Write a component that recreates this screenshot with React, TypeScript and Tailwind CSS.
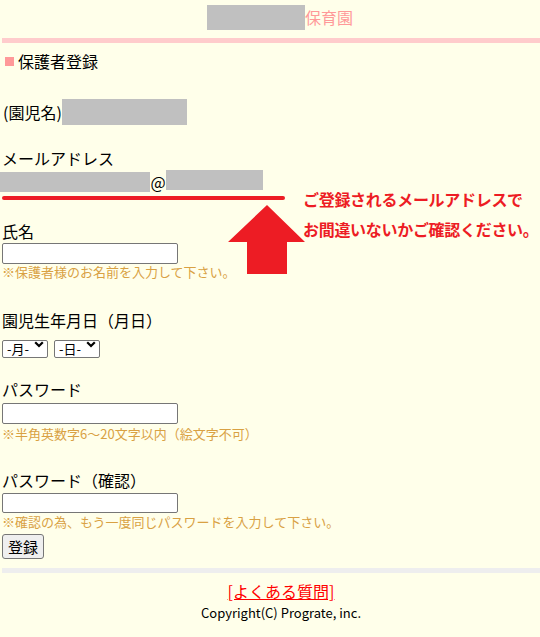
import React from "react";

const Chevron = () => (
  <svg width="10" height="7" viewBox="0 0 10 7" className="pointer-events-none absolute right-[4px] top-[6px]">
    <path d="M1.2 1.2 L5 5 L8.8 1.2" fill="none" stroke="#000" strokeWidth="2.2" />
  </svg>
);

const Select = ({ label }: { label: string }) => (
  <div className="relative h-[18px] w-[46px]">
    <select className="box-border h-[18px] w-[46px] appearance-none rounded-[2px] border border-[#767676] bg-white pl-[4px] text-[13px] leading-[16px] text-black">
      <option>{label}</option>
    </select>
    <Chevron />
  </div>
);

const Input = ({ h = 21 }: { h?: number }) => (
  <input
    type="text"
    className={`ml-[2px] w-[176px] rounded-[2px] border border-[#767676] bg-white ${h === 21 ? "h-[21px]" : "h-[20px]"}`}
  />
);

const Label = ({ children, mt }: { children: React.ReactNode; mt: string }) => (
  <div className={`${mt} flex h-[22px] items-center pl-[2px] text-[16px] leading-[22px] text-black`}>{children}</div>
);

const Hint = ({ children, mt = "" }: { children: React.ReactNode; mt?: string }) => (
  <div className={`${mt} flex h-[16px] items-center pl-[2px] text-[13px] leading-[16px] text-[#d9a143]`}>{children}</div>
);

export default function App() {
  return (
    <div
      className="relative min-h-[637px] w-[540px] overflow-hidden bg-[#ffffea]"
      style={{ fontFamily: '"Noto Sans CJK JP", "Noto Sans", sans-serif' }}
    >
      {/* header */}
      <div className="flex h-[38px] items-start pl-[207px] pt-[5px]">
        <div className="h-[25px] w-[98px] bg-[#c0c0c0]" />
        <span className="text-[16px] leading-[25px] text-[#ff9999]">保育園</span>
      </div>
      <div className="ml-[2px] h-[5px] bg-[#ffcccc]" />

      {/* title */}
      <div className="flex h-[36px] items-center">
        <div className="ml-[5px] mr-[4px] h-[9px] w-[9px] bg-[#ff9999]" />
        <span className="text-[16px] leading-[22px] text-black">保護者登録</span>
      </div>

      {/* child name */}
      <div className="mt-[20px] flex h-[26px] items-center pl-[3px]">
        <span className="text-[16px] leading-[22px] text-black">(園児名)</span>
        <div className="h-[26px] w-[125px] bg-[#c0c0c0]" />
      </div>

      <Label mt="mt-[22px]">メールアドレス</Label>
      <div className="mt-[1px] flex h-[22px] items-start">
        <div className="mt-[2px] h-[20px] w-[150px] bg-[#c0c0c0]" />
        <span className="mt-[3px] w-[16px] text-center text-[16px] leading-[18px] text-black">@</span>
        <div className="h-[20px] w-[97px] bg-[#c0c0c0]" />
      </div>

      <Label mt="mt-[28px]">氏名</Label>
      <div className="mt-[1px] flex">
        <Input />
      </div>
      <Hint>※保護者様のお名前を入力して下さい。</Hint>

      <Label mt="mt-[29px]">園児生年月日（月日）</Label>
      <div className="mt-[4px] flex gap-[6px] pl-[2px]">
        <Select label="-月-" />
        <Select label="-日-" />
      </div>

      <Label mt="mt-[25px]">パスワード</Label>
      <div className="mt-[3px] flex">
        <Input />
      </div>
      <Hint mt="mt-[2px]">※半角英数字6～20文字以内（絵文字不可）</Hint>

      <Label mt="mt-[27px]">パスワード（確認）</Label>
      <div className="mt-[2px] flex">
        <Input h={20} />
      </div>
      <Hint mt="mt-[1px]">※確認の為、もう一度同じパスワードを入力して下さい。</Hint>
      <div className="mt-[4px] flex pl-[2px]">
        <button className="h-[25px] w-[42px] rounded-[3px] border border-[#767676] bg-[#efefef] text-[15px] leading-[20px] text-black">
          登録
        </button>
      </div>

      <div className="ml-[2px] mt-[9px] h-[5px] bg-[#eeeeee]" />

      <div className="mt-[8px] flex h-[20px] items-center justify-center pl-[22px]">
        <a href="#" className="text-[16px] leading-[20px] text-[#ff0000] underline">
          [よくある質問]
        </a>
      </div>
      <div className="mt-[2px] flex h-[20px] items-center justify-center pl-[22px] text-[13px] leading-[20px] text-black">
        Copyright(C) Prograte, inc.
      </div>

      {/* annotation overlay */}
      <svg className="pointer-events-none absolute left-0 top-0" width="540" height="300" viewBox="0 0 540 300">
        <line x1="4" y1="198" x2="283" y2="198" stroke="#ed1c24" strokeWidth="4" strokeLinecap="round" />
        <polygon points="267,205 305,242 287,242 287,274 247,274 247,242 228,242" fill="#ed1c24" />
      </svg>
      <div className="pointer-events-none absolute left-[303px] top-[184px] flex flex-col whitespace-nowrap text-[16px] font-bold leading-[30px] tracking-[-0.3px] text-[#ed1c24]">
        <span>ご登録されるメールアドレスで</span>
        <span>お間違いないかご確認ください。</span>
      </div>
    </div>
  );
}
